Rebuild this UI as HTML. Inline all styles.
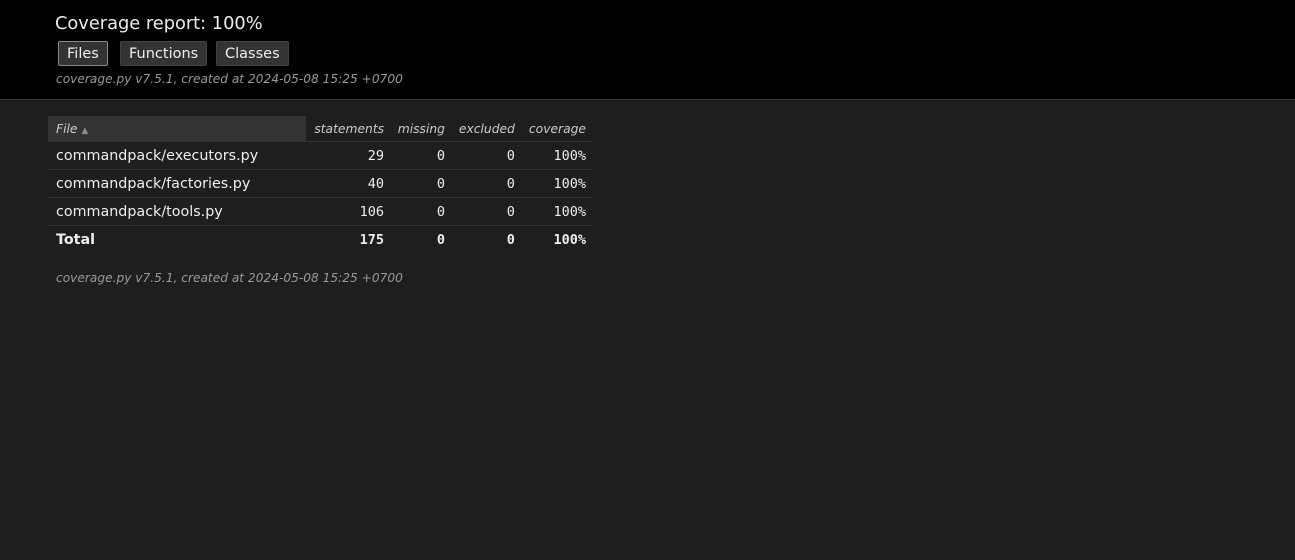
<!DOCTYPE html>
<html><head><meta charset="utf-8"><style>
body{margin:0;background:#1e1e1e;color:#eee;font-family:"DejaVu Sans","Liberation Sans",sans-serif;width:1295px;height:560px;overflow:hidden}
header{background:#000;height:99px;border-bottom:1px solid #333;position:relative}
h1{position:absolute;left:55px;top:13px;margin:0;font-weight:normal;font-size:17.8px;color:#eee}
.btn{position:absolute;top:41px;height:23px;line-height:25px;background:#333;border:1px solid #444;border-radius:2px;font-size:14.5px;padding:0 8px;color:#eee}
.meta{position:absolute;left:56px;font-style:italic;font-size:12.2px;color:#999}
table{position:absolute;left:48px;top:116px;border-collapse:collapse;width:544px}
th{font-weight:normal;font-style:italic;font-size:12.3px;color:#ccc;height:25px;text-align:right;padding:0 6px;border-bottom:1px solid #333}
th.f{text-align:left;background:#333;width:244px;padding-left:8px}
td{height:27px;border-bottom:1px solid #333;font-family:"DejaVu Sans Mono",monospace;font-size:13.5px;text-align:right;padding:0 6px}
td.n{font-family:"DejaVu Sans",sans-serif;font-size:14.3px;text-align:left;padding-left:8px}
tr.t td{font-weight:bold;border-bottom:none}
</style></head><body>
<header>
<h1>Coverage report: 100%</h1>
<div class="btn" style="left:58px;border-color:#888">Files</div>
<div class="btn" style="left:120px">Functions</div>
<div class="btn" style="left:216px">Classes</div>
<div class="meta" style="top:72px">coverage.py v7.5.1, created at 2024-05-08 15:25 +0700</div>
</header>
<table>
<tr><th class="f">File <span style="font-size:9px;color:#888;font-style:normal">▲</span></th><th>statements</th><th>missing</th><th>excluded</th><th>coverage</th></tr>
<tr><td class="n">commandpack/executors.py</td><td>29</td><td>0</td><td>0</td><td>100%</td></tr>
<tr><td class="n">commandpack/factories.py</td><td>40</td><td>0</td><td>0</td><td>100%</td></tr>
<tr><td class="n">commandpack/tools.py</td><td>106</td><td>0</td><td>0</td><td>100%</td></tr>
<tr class="t"><td class="n">Total</td><td>175</td><td>0</td><td>0</td><td>100%</td></tr>
</table>
<div class="meta" style="top:271px">coverage.py v7.5.1, created at 2024-05-08 15:25 +0700</div>
</body></html>
